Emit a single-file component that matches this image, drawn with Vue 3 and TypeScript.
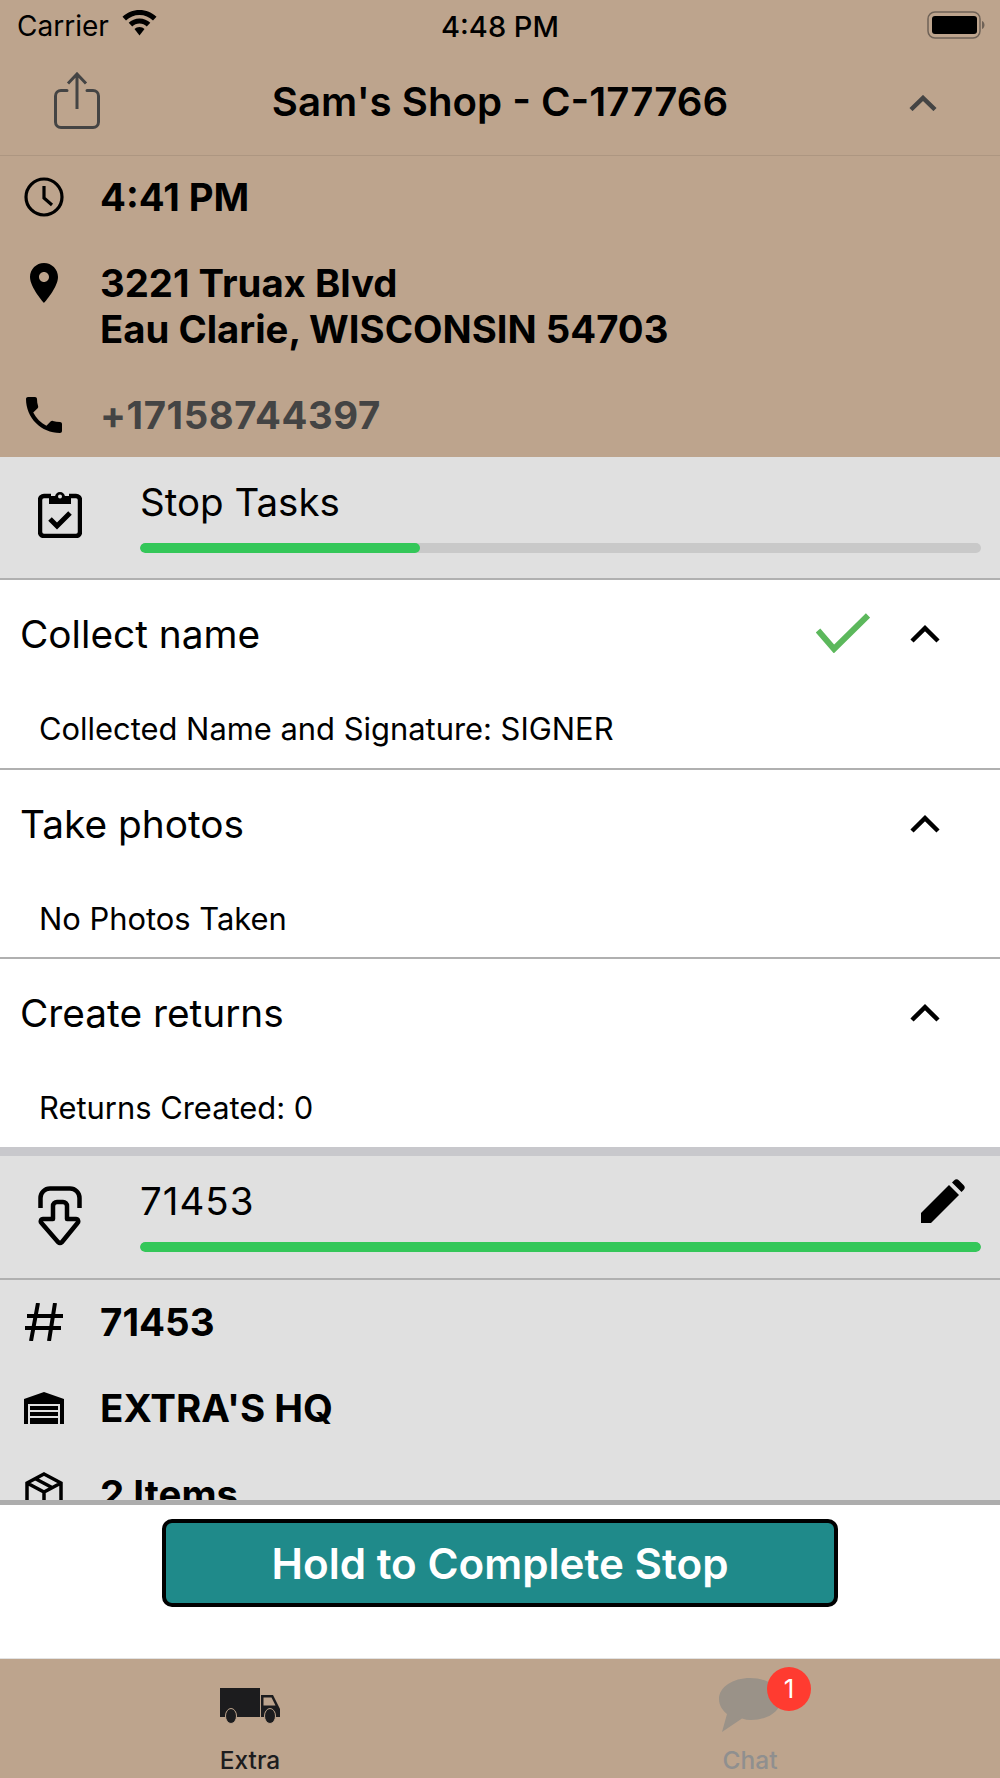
<script setup lang="ts">
import { ref } from "vue";

interface ITask {
    title: string;
    detail: string;
    done: boolean;
}

const tasks = ref<ITask[]>([
    { title: "Collect name", detail: "Collected Name and Signature: SIGNER", done: true },
    { title: "Take photos", detail: "No Photos Taken", done: false },
    { title: "Create returns", detail: "Returns Created: 0", done: false },
]);

const taskProgress = 1 / 3;
</script>

<template>
    <div class="screen">
        <header class="top">
            <div class="status">
                <span class="carrier">Carrier</span>
                <svg class="wifi" viewBox="0 0 35 26" width="35" height="26">
                    <path d="M17.5 0C11 0 5 2.500 .5 6.800l3.500 3.700C7.600 7 12.300 5 17.500 5s9.900 2 13.500 5.500l3.500-3.700C30 2.500 24 0 17.500 0z" />
                    <path d="M17.500 8.500c-4.200 0-8 1.600-10.800 4.300l3.500 3.700c1.900-1.800 4.500-3 7.300-3s5.400 1.200 7.300 3l3.500-3.700c-2.800-2.700-6.600-4.300-10.800-4.300z" />
                    <path d="M17.500 17c-2 0-3.700.8-5 2l5 6.500 5-6.500c-1.300-1.200-3-2-5-2z" />
                </svg>
                <span class="clock-text">4:48 PM</span>
                <svg class="battery" viewBox="0 0 58 28" width="58" height="28">
                    <rect x="1" y="1" width="52" height="26" rx="7" fill="none" stroke="#6f6257" stroke-width="1.500" />
                    <rect x="5" y="5" width="45" height="18" rx="3" fill="#000" />
                    <path d="M55 10c1.500.5 2.500 2.200 2.500 4s-1 3.500-2.500 4z" fill="#6f6257" />
                </svg>
            </div>

            <div class="title-bar">
                <svg class="share" viewBox="0 0 46 58" width="46" height="58" fill="none" stroke="#444" stroke-width="3">
                    <path d="M13 18.500H7A5.500 5.500 0 0 0 1.500 24v26A5.500 5.500 0 0 0 7 55.500h32a5.500 5.500 0 0 0 5.500-5.500V24a5.500 5.500 0 0 0-5.500-5.500h-6" stroke-linecap="round" />
                    <path d="M23 37V3M14 11.500 23 2l9 9.500" />
                </svg>
                <h1 class="title">Sam's Shop - C-177766</h1>
                <svg class="title-chevron" viewBox="0 0 28 16" width="28" height="16" fill="none" stroke="#444" stroke-width="4.500">
                    <path d="M2 14.500 14 3l12 11.500" />
                </svg>
            </div>

            <div class="info">
                <div class="info-row">
                    <div class="info-icon">
                        <svg viewBox="0 0 40 40" width="40" height="40" fill="none" stroke="#000" stroke-width="3.200">
                            <circle cx="20" cy="20" r="18" />
                            <path d="M20 9v12l8 7" />
                        </svg>
                    </div>
                    <div>4:41 PM</div>
                </div>
                <div class="info-row">
                    <div class="info-icon">
                        <svg viewBox="0 0 24 24" width="48" height="48">
                            <path d="M12 2C8.130 2 5 5.130 5 9c0 5.250 7 13 7 13s7-7.750 7-13c0-3.870-3.130-7-7-7zm0 9.500c-1.380 0-2.500-1.120-2.500-2.500s1.120-2.500 2.500-2.500 2.500 1.120 2.500 2.500-1.120 2.500-2.500 2.500z" />
                        </svg>
                    </div>
                    <div>3221 Truax Blvd<br />Eau Clarie, WISCONSIN 54703</div>
                </div>
                <div class="info-row phone">
                    <div class="info-icon">
                        <svg viewBox="0 0 24 24" width="48" height="48">
                            <path d="M6.620 10.790c1.440 2.830 3.760 5.140 6.590 6.590l2.200-2.200c.27-.27.67-.36 1.020-.24 1.120.37 2.330.57 3.570.57.55 0 1 .45 1 1V20c0 .55-.45 1-1 1-9.390 0-17-7.610-17-17 0-.55.45-1 1-1h3.500c.55 0 1 .45 1 1 0 1.250.2 2.450.57 3.570.11.350.03.740-.25 1.020l-2.200 2.200z" />
                        </svg>
                    </div>
                    <div>+17158744397</div>
                </div>
            </div>
        </header>

        <main class="scroll">
            <section class="group-head">
                <svg class="group-icon" viewBox="0 0 44 48" width="44" height="48" fill="none" stroke="#000" stroke-width="4.500">
                    <path d="M13 6H6a4 4 0 0 0-4 4v32a4 4 0 0 0 4 4h32a4 4 0 0 0 4-4V10a4 4 0 0 0-4-4h-7" />
                    <path d="M12 13V7h6a4 4 0 0 1 8 0h6v6z" fill="#000" stroke-width="2" />
                    <circle cx="22" cy="6.500" r="2" fill="#e0e0e0" stroke="none" />
                    <path d="m12 29 7 7 13-13" stroke-width="5" />
                </svg>
                <div class="group-main">
                    <div class="group-title">Stop Tasks</div>
                    <div class="bar">
                        <div class="bar-fill" :style="{ width: taskProgress * 100 + '%' }"></div>
                    </div>
                </div>
            </section>

            <section v-for="task in tasks" :key="task.title" class="task">
                <div class="task-head">
                    <span class="task-title">{{ task.title }}</span>
                    <svg v-if="task.done" class="task-check" viewBox="0 0 54 40" width="54" height="40" fill="none" stroke="#5cb85c" stroke-width="6">
                        <path d="M2 17.500 18 36 52 2.500" />
                    </svg>
                    <svg class="task-chevron" viewBox="0 0 30 18" width="30" height="18" fill="none" stroke="#000" stroke-width="4.500">
                        <path d="M2 16 15 3.200 28 16" />
                    </svg>
                </div>
                <div class="task-detail">{{ task.detail }}</div>
            </section>

            <section class="group-head order-head">
                <svg class="group-icon" viewBox="0 0 44 60" width="44" height="60" fill="none" stroke="#000" stroke-width="4.500" stroke-linejoin="round">
                    <path d="M2.500 22V12A9.500 9.500 0 0 1 12 2.500h20a9.500 9.500 0 0 1 9.500 9.500v10" />
                    <path d="M15 33V20a4 4 0 0 1 4-4h6a4 4 0 0 1 4 4v13h9c2 0 3 2.500 1.500 4L24 56a3 3 0 0 1-4 0L3.500 37c-1.500-1.500-.5-4 1.500-4z" />
                </svg>
                <div class="group-main">
                    <div class="group-title">71453</div>
                    <div class="bar">
                        <div class="bar-fill" style="width: 100%"></div>
                    </div>
                </div>
                <svg class="edit" viewBox="0 0 46 46" width="46" height="46">
                    <path d="M1 35 29 7l10 10-28 28H1z" />
                    <path d="M32 4.500l2-2a3.500 3.500 0 0 1 5 0l4.500 4.500a3.500 3.500 0 0 1 0 5l-2 2z" />
                </svg>
            </section>

            <section class="order">
                <div class="info-row">
                    <div class="info-icon">
                        <svg viewBox="0 0 40 38" width="40" height="38" fill="none" stroke="#000" stroke-width="4">
                            <path d="M14 0 7 38M31 0l-6 38M3 13h36M1 25h36" />
                        </svg>
                    </div>
                    <div>71453</div>
                </div>
                <div class="info-row">
                    <div class="info-icon">
                        <svg viewBox="0 0 42 32" width="42" height="32">
                            <path d="M21 0 41 7v25h-4V12H5v20H1V7z" />
                            <path d="M7 14h28v4H7zM7 20h28v4H7zM7 26h28v6H7z" />
                        </svg>
                    </div>
                    <div>EXTRA'S HQ</div>
                </div>
                <div class="info-row">
                    <div class="info-icon">
                        <svg viewBox="0 0 38 44" width="38" height="44" fill="none" stroke="#000" stroke-width="3.500">
                            <path d="M19 2 36 11v22L19 42 2 33V11zM2 11l17 9 17-9M19 20v22M10 6.500 27 15.500" />
                        </svg>
                    </div>
                    <div>2 Items</div>
                </div>
            </section>
        </main>

        <div class="action">
            <button class="complete" type="button">Hold to Complete Stop</button>
        </div>

        <nav class="tabs">
            <div class="tab">
                <svg viewBox="0 0 60 36" width="60" height="36">
                    <path d="M0 0h40v29H0z" fill="#1c1c1e" />
                    <path d="M41 7h12l7 14v8H41z" fill="#1c1c1e" />
                    <path d="M43.500 9.500h8l4 8H43.500z" fill="#bda48d" />
                    <ellipse cx="11" cy="28" rx="5.500" ry="7.500" fill="#1c1c1e" stroke="#bda48d" />
                    <ellipse cx="50" cy="28" rx="5.500" ry="7.500" fill="#1c1c1e" stroke="#bda48d" />
                </svg>
                <span>Extra</span>
            </div>
            <div class="tab muted">
                <div class="chat-icon">
                    <svg viewBox="0 0 62 54" width="62" height="54" fill="#9a9288">
                        <path d="M31 0c17 0 31 9 31 21 0 12-13 21-30 21-3 0-6-.5-9-1.500L3 54l5-18C3 32 0 27 0 21 0 9 14 0 31 0z" />
                    </svg>
                    <b class="badge">1</b>
                </div>
                <span>Chat</span>
            </div>
        </nav>
    </div>
</template>

<style scoped>
.screen {
    width: 1000px;
    height: 1778px;
    display: flex;
    flex-direction: column;
    overflow: hidden;
    background: #fff;
    color: #000;
    font-family: Inter, "Liberation Sans", sans-serif;
}

.top {
    background: #bda48d;
    flex: none;
}

.status {
    height: 48px;
    position: relative;
    display: flex;
    align-items: center;
    padding: 2px 15px 0 17px;
    font-size: 28px;
}

.wifi {
    margin-left: 13px;
    margin-top: -6px;
}

.clock-text {
    position: absolute;
    left: 0;
    right: 0;
    text-align: center;
    font-size: 29px;
    font-weight: 500;
}

.battery {
    margin-left: auto;
    margin-top: -3px;
}

.title-bar {
    height: 105px;
    display: flex;
    align-items: center;
    justify-content: space-between;
    padding: 0 63px 0 54px;
    border-bottom: 1px solid #ad9681;
}

.share {
    margin-top: -3px;
}

.title {
    margin: 0 9px 0 0;
    font-size: 40.2px;
    font-weight: 600;
    line-height: 1;
}

.info {
    display: flex;
    flex-direction: column;
    gap: 4px;
    padding: 18px 0 1px;
    font-size: 38.3px;
    font-weight: 700;
    line-height: 46px;
}

.info-row {
    display: flex;
    padding: 0 0 18px;
}

.info-row + .info-row {
    padding-top: 18px;
}

.info-icon {
    flex: none;
    width: 87px;
    margin-right: 13px;
    height: 46px;
    display: flex;
    align-items: center;
    justify-content: center;
}

.phone {
    color: #444;
    letter-spacing: 0.6px;
}

.phone svg {
    fill: #000;
}

.scroll {
    flex: none;
    height: 1043px;
    overflow: hidden;
}

.group-head {
    position: relative;
    height: 121px;
    background: #e0e0e0;
    display: flex;
    border-bottom: 2px solid #b0b0b0;
    box-sizing: content-box;
}

.group-icon {
    flex: none;
    margin: 33px 0 0 38px;
}

.group-main {
    flex: 1;
    margin: 22px 19px 0 58px;
}

.group-title {
    font-size: 38.5px;
    line-height: 46px;
}

.bar {
    margin-top: 18px;
    height: 10px;
    border-radius: 5px;
    background: #c9c9c9;
    overflow: hidden;
}

.bar-fill {
    height: 100%;
    border-radius: 5px;
    background: #34c759;
}

.task {
    height: 187px;
    border-bottom: 2px solid #b0b0b0;
    box-sizing: content-box;
}

.group-head + .task {
    height: 188px;
}

.task:nth-of-type(4) {
    height: 188px;
    border-bottom: 9px solid #c8c8cc;
}

.task-head {
    height: 106px;
    display: flex;
    align-items: center;
    padding: 0 60px 0 20px;
}

.task-title {
    font-size: 38.8px;
    flex: 1;
}

.task-check {
    margin-right: 40px;
}

.task-chevron {
    margin-top: 2px;
}

.task-detail {
    margin-top: 25px;
    padding-left: 39px;
    font-size: 30.9px;
    line-height: 36px;
}

.order-head {
    height: 122px;
}

.order-head .group-icon {
    margin-top: 30px;
}

.order-head .group-title {
    letter-spacing: 1px;
}

.edit {
    position: absolute;
    left: 920px;
    top: 22px;
}

.order {
    background: #e0e0e0;
    padding-top: 19px;
    height: 300px;
    font-size: 38.5px;
    font-weight: 700;
    line-height: 46px;
    display: flex;
    flex-direction: column;
    gap: 40px;
}

.order .info-row {
    padding: 0;
}

.action {
    flex: none;
    height: 158px;
    box-sizing: border-box;
    border-top: 5px solid #adadad;
    padding-top: 14px;
    display: flex;
    justify-content: center;
}

.complete {
    width: 676px;
    height: 88px;
    padding: 0;
    border: 4px solid #000;
    border-radius: 10px;
    background: #1f8a8a;
    color: #fff;
    font: 600 42.2px Inter, "Liberation Sans", sans-serif;
}

.tabs {
    flex: 1;
    background: #bda48d;
    border-top: 1px solid #e2e2e2;
    display: grid;
    grid-template-columns: 1fr 1fr;
}

.tab {
    position: relative;
    display: flex;
    flex-direction: column;
    align-items: center;
    font-size: 24.5px;
    color: #1c1c1e;
}

.tab svg {
    display: block;
}

.tab > svg {
    margin-top: 29px;
}

.tab span {
    position: absolute;
    top: 88px;
    line-height: 26px;
    font-weight: 500;
}

.muted {
    color: #8f8f8f;
}

.chat-icon {
    position: relative;
    margin-top: 19px;
}

.badge {
    position: absolute;
    left: 48px;
    top: -11px;
    width: 44px;
    height: 44px;
    border-radius: 50%;
    background: #ff3b30;
    color: #fff;
    font-size: 26px;
    font-weight: 400;
    line-height: 44px;
    text-align: center;
}
</style>

<style>
html,
body {
    margin: 0;
}
</style>
